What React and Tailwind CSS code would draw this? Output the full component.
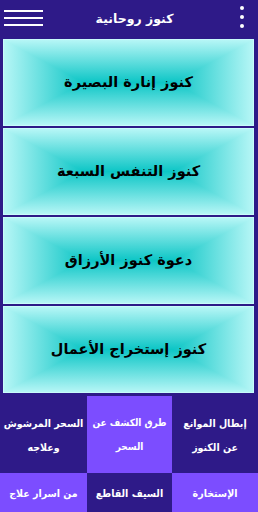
import React from "react";

const cards = [
  "كنوز إنارة البصيرة",
  "كنوز التنفس السبعة",
  "دعوة كنوز الأرزاق",
  "كنوز إستخراج الأعمال",
];

// grid items, right to left (dir=rtl)
const tiles = [
  { lines: ["إبطال الموانع", "عن الكنوز"], light: false },
  { lines: ["طرق الكشف عن", "السحر"], light: true, small: true },
  { lines: ["السحر المرشوش", "وعلاجه"], light: false },
  { lines: ["الإستخارة"], light: true },
  { lines: ["السيف القاطع", "لكل ساحر"], light: false },
  { lines: ["من اسرار علاج"], light: true },
];

const arabic = { fontFamily: '"DejaVu Sans", sans-serif' };
const condensed = { fontFamily: '"DejaVu Sans Condensed", "DejaVu Sans", sans-serif' };

export default function App() {
  return (
    <div className="w-[258px] h-[512px] overflow-hidden bg-[#2e1a88]" style={arabic}>
      {/* Header */}
      <div className="h-[39px] flex items-center pl-[4px] pr-[14px]">
        <div className="flex flex-col gap-[5px] w-[39px] -mt-[3px]">
          <span className="block h-[2px] bg-white" />
          <span className="block h-[2px] bg-white" />
          <span className="block h-[2px] bg-white" />
        </div>
        <div dir="rtl" className="flex-1 text-center text-white font-bold text-[12.5px] pr-[14px]">
          كنوز روحانية
        </div>
        <div className="flex flex-col gap-[5px] -mt-[6px]">
          <span className="block w-[4px] h-[4px] rounded-full bg-white" />
          <span className="block w-[4px] h-[4px] rounded-full bg-white" />
          <span className="block w-[4px] h-[4px] rounded-full bg-white" />
        </div>
      </div>

      {/* Cards */}
      <div className="flex flex-col gap-[2px] pl-[3px] pr-[4px] pb-[3px]">
        {cards.map((c) => (
          <div
            key={c}
            dir="rtl"
            className="h-[87px] flex items-center justify-center border border-[#c8fbfb] bg-[linear-gradient(to_right,#b6f6f6_0%,#0dc6c6_32%,#0dc6c6_68%,#b6f6f6_100%),linear-gradient(to_bottom,#b6f6f6_0%,#0dc6c6_50%,#b6f6f6_100%)] bg-blend-lighten"
          >
            <span className="text-black font-bold text-[14.5px]">{c}</span>
          </div>
        ))}
      </div>

      {/* Tiles */}
      <div dir="rtl" className="grid grid-cols-[86px_85px_87px]" style={condensed}>
        {tiles.map((t, i) => (
          <div
            key={t.lines[0]}
            className={`${t.light ? "bg-[#7c4dff]" : "bg-[#2e1a88]"} ${
              i < 3 ? "h-[77px] justify-center" : "h-[60px] justify-start pt-[8px]"
            } flex flex-col items-center text-center overflow-hidden`}
          >
            {t.lines.map((l) => (
              <span
                key={l}
                className={`block whitespace-nowrap text-white font-bold leading-[24px] ${
                  t.small ? "text-[10px]" : "text-[10.5px]"
                }`}
              >
                {l}
              </span>
            ))}
          </div>
        ))}
      </div>
    </div>
  );
}
